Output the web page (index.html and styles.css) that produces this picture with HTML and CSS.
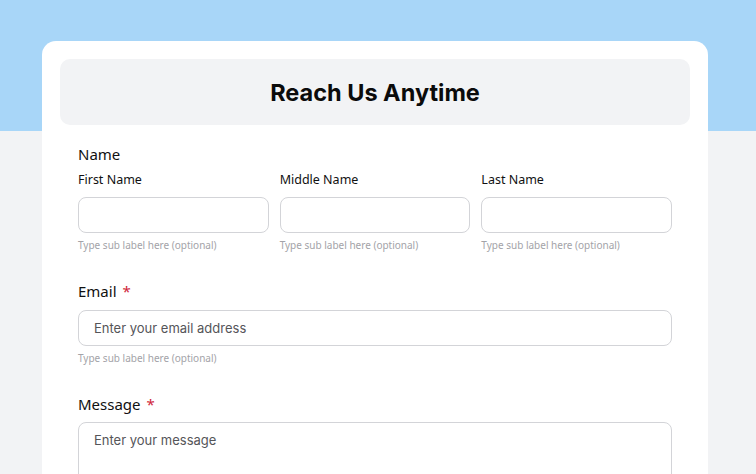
FILE: index.html
```html
<!DOCTYPE html>
<html lang="en">
<head>
    <meta charset="UTF-8">
    <meta name="viewport" content="width=device-width, initial-scale=1.0">
    <title>Reach Us Anytime</title>
    <link rel="stylesheet" href="styles.css">
</head>
<body>
    <div class="form-card">
        <div class="form-header">
            <h1>Reach Us Anytime</h1>
        </div>
        <form class="form-body">
            <div class="field">
                <label class="field-label">Name</label>
                <div class="name-grid">
                    <div class="name-part">
                        <span class="part-label">First Name</span>
                        <input type="text" class="text-input">
                        <span class="hint">Type sub label here (optional)</span>
                    </div>
                    <div class="name-part">
                        <span class="part-label">Middle Name</span>
                        <input type="text" class="text-input">
                        <span class="hint">Type sub label here (optional)</span>
                    </div>
                    <div class="name-part">
                        <span class="part-label">Last Name</span>
                        <input type="text" class="text-input">
                        <span class="hint">Type sub label here (optional)</span>
                    </div>
                </div>
            </div>

            <div class="field">
                <label class="field-label">Email <span class="required">*</span></label>
                <input type="email" class="text-input" placeholder="Enter your email address">
                <span class="hint">Type sub label here (optional)</span>
            </div>

            <div class="field">
                <label class="field-label">Message <span class="required">*</span></label>
                <textarea class="text-input message-input" placeholder="Enter your message"></textarea>
            </div>
        </form>
    </div>
</body>
</html>
```

FILE: styles.css
```css
:root {
    --band-color: #a8d6f8;
    --page-color: #f2f3f5;
    --border-color: #d3d4d8;
    --hint-color: #a3a3a8;
    --text-color: #111111;
}
body {
    margin: 0;
    min-height: 100vh;
    background: linear-gradient(var(--band-color) 0, var(--band-color) 131px, var(--page-color) 131px);
    font-family: 'Noto Sans', 'Open Sans', sans-serif;
    color: var(--text-color);
}
.form-card {
    width: 630px;
    margin: 41px 0 0 42px;
    padding: 18px 18px 40px;
    background-color: white;
    border-radius: 14px;
}
.form-header {
    height: 66px;
    display: flex;
    justify-content: center;
    align-items: center;
    background-color: var(--page-color);
    border-radius: 10px;
}
.form-header h1 {
    margin: 0;
    font-family: 'Inter', sans-serif;
    font-size: 23.5px;
    font-weight: 700;
    color: #0b0b0b;
}
.form-body {
    padding: 19px 18px 0;
}
.field {
    display: flex;
    flex-direction: column;
    margin-bottom: 29px;
}
.field-label {
    font-size: 15px;
    line-height: 20px;
    margin-bottom: 9px;
}
.field:first-child .field-label {
    margin-bottom: 7px;
}
.field:last-child .field-label {
    margin-bottom: 8px;
}
.required {
    color: #d0263a;
    margin-left: 2px;
}
.name-grid {
    display: grid;
    grid-template-columns: repeat(3, 1fr);
    gap: 11px;
}
.name-part {
    display: flex;
    flex-direction: column;
}
.part-label {
    font-size: 12.5px;
    line-height: 18px;
    margin-bottom: 8px;
}
.text-input {
    box-sizing: border-box;
    height: 36px;
    width: 100%;
    padding: 0 15px;
    border: 1px solid var(--border-color);
    border-radius: 8px;
    font-family: 'Inter', sans-serif;
    font-size: 13px;
    color: #333;
    background-color: white;
    outline: none;
}
.text-input::placeholder {
    color: #555559;
}
.message-input {
    height: 110px;
    padding-top: 9px;
    resize: none;
}
.hint {
    margin-top: 5px;
    font-size: 10px;
    line-height: 14px;
    color: var(--hint-color);
}
```
